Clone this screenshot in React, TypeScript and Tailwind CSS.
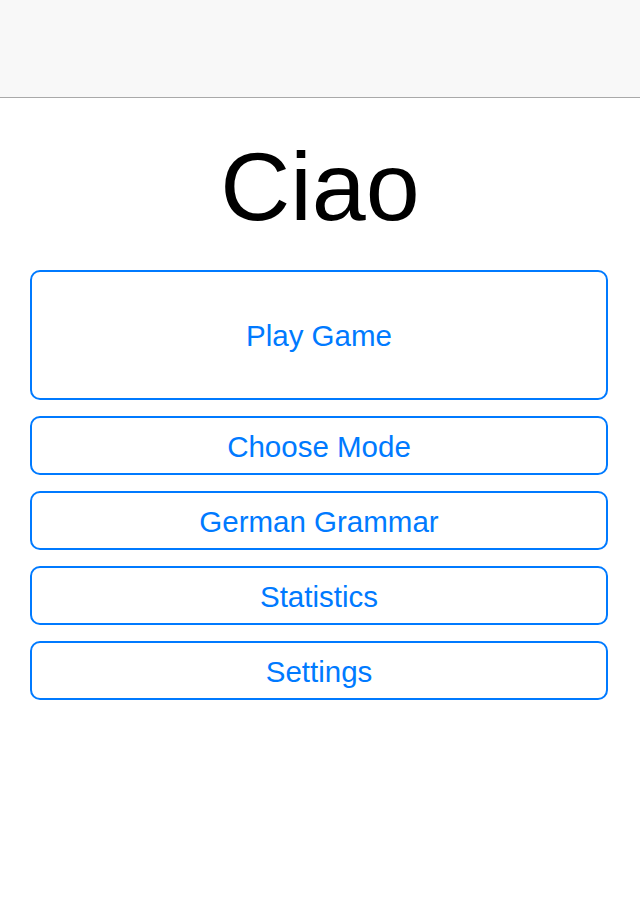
export default function App() {
  const items = ["Choose Mode", "German Grammar", "Statistics", "Settings"];

  return (
    <div className="w-[640px] h-[920px] bg-white font-['Liberation_Sans',Arial,sans-serif] flex flex-col">
      <div className="h-[98px] bg-[#f8f8f8] border-b border-[#a9a9a9] shrink-0" />

      <h1 className="mt-[40px] text-center text-[97px] leading-[97px] text-black">Ciao</h1>

      <div className="mt-[35px] ml-[30px] w-[578px] flex flex-col gap-[16px]">
        <button className="h-[130px] pt-[3px] border-2 border-[#007aff] rounded-[10px] text-[#007aff] text-[29.5px] flex items-center justify-center">
          Play Game
        </button>
        {items.map((label) => (
          <button
            key={label}
            className="h-[59px] pt-[3px] border-2 border-[#007aff] rounded-[10px] text-[#007aff] text-[29.5px] flex items-center justify-center"
          >
            {label}
          </button>
        ))}
      </div>
    </div>
  );
}
